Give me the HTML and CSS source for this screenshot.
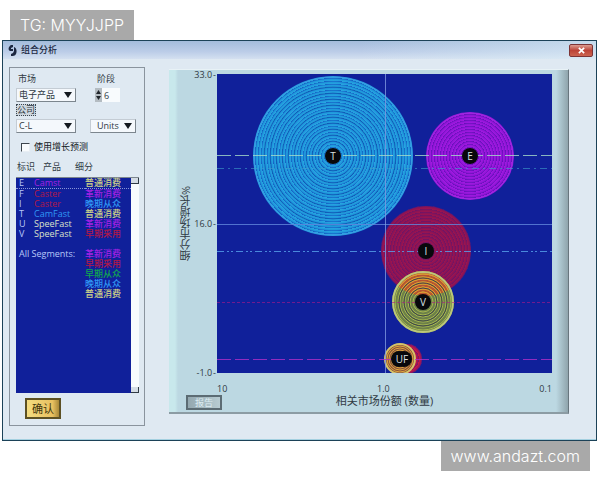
FILE: index.html
```
<!DOCTYPE html>
<html lang="zh-CN">
<head>
    <meta charset="UTF-8">
    <meta name="viewport" content="width=device-width, initial-scale=1.0">
    <title>组合分析</title>
    <link rel="stylesheet" href="styles.css">
</head>
<body>

    <div class="tag tag-top">TG: MYYJJPP</div>

    <main class="window">
        <header class="titlebar">
            <svg class="app-icon" viewBox="0 0 9 13" aria-hidden="true">
                <path d="M5 1 L3 1 C0 3 0 6 2 7 L5 7 L5 5 L3 5 L3 4 L5 3 Z" fill="#1c2740"/>
                <path d="M6 3 C9 4 9 8 8 10 C7 12 5 12 3 12 L3 10 L5 9 L6 7 L6 5 Z" fill="#1c2740"/>
            </svg>
            <h1>组合分析</h1>
            <button type="button" class="close" aria-label="关闭">
                <svg viewBox="0 0 8 8"><path d="M1 1 L7 7 M7 1 L1 7" stroke="#fff" stroke-width="2"/></svg>
            </button>
        </header>

        <div class="content">
            <form class="sidebar">
                <div class="filters">
                    <div class="field">
                        <label for="market">市场</label>
                        <select id="market"><option>电子产品</option></select>
                    </div>
                    <div class="field">
                        <label for="period">阶段</label>
                        <div class="stepper">
                            <svg viewBox="0 0 7 14" aria-hidden="true">
                                <path d="M0 0 H7 V14 H0 Z" fill="#b4bcc2"/>
                                <path d="M1 6 L3.5 2 L6 6 Z M1 8 L3.5 12 L6 8 Z" fill="#20262c"/>
                            </svg>
                            <input type="text" id="period" value="6">
                        </div>
                    </div>
                    <div class="field">
                        <label for="company" class="focused">公司</label>
                        <select id="company"><option>C-L</option></select>
                    </div>
                    <div class="field field-end">
                        <select id="units" class="units" aria-label="Units"><option>Units</option></select>
                    </div>
                </div>

                <div class="check">
                    <input type="checkbox" id="forecast">
                    <label for="forecast">使用增长预测</label>
                </div>

                <div class="list-head"><span>标识</span><span>产品</span><span>细分</span></div>
                <div class="listbox">
                    <div class="list">
                        <table>
                            <tr class="selected"><td>E</td><td class="purple">Camst</td><td class="yellow">普通消费</td></tr>
                            <tr><td>F</td><td class="red">Caster</td><td class="purple">革新消费</td></tr>
                            <tr><td>I</td><td class="red">Caster</td><td class="blue">晚期从众</td></tr>
                            <tr><td>T</td><td class="blue">CamFast</td><td class="yellow">普通消费</td></tr>
                            <tr><td>U</td><td class="cream">SpeeFast</td><td class="purple">革新消费</td></tr>
                            <tr><td>V</td><td class="cream">SpeeFast</td><td class="red">早期采用</td></tr>
                            <tr class="blank"><td colspan="3"></td></tr>
                            <tr><td colspan="2">All Segments:</td><td class="purple">革新消费</td></tr>
                            <tr><td colspan="2"></td><td class="red">早期采用</td></tr>
                            <tr><td colspan="2"></td><td class="green">早期从众</td></tr>
                            <tr><td colspan="2"></td><td class="blue">晚期从众</td></tr>
                            <tr><td colspan="2"></td><td class="yellow">普通消费</td></tr>
                        </table>
                    </div>
                    <div class="scrollbar"><span></span><span></span></div>
                </div>

                <button type="button" class="ok">确认</button>
            </form>

            <section class="chart">
                <div class="y-axis">
                    <span class="y-title">细分市场增长%</span>
                    <div class="y-ticks"><span>33.0</span><span>16.0</span><span>-1.0</span></div>
                </div>
                <svg class="plot" viewBox="0 0 335 299" role="img" aria-label="细分市场增长">
                    <defs>
                        <radialGradient id="ringsT" gradientUnits="userSpaceOnUse" cx="116" cy="82" r="3" spreadMethod="repeat">
                            <stop offset="0" stop-color="#28a4e0"/>
                            <stop offset=".55" stop-color="#1f98dc"/>
                            <stop offset="1" stop-color="#1560c4"/>
                        </radialGradient>
                        <radialGradient id="ringsE" gradientUnits="userSpaceOnUse" cx="253" cy="82" r="3" spreadMethod="repeat">
                            <stop offset="0" stop-color="#a01ae0"/>
                            <stop offset=".55" stop-color="#9216d8"/>
                            <stop offset="1" stop-color="#6410b8"/>
                        </radialGradient>
                        <radialGradient id="ringsI" gradientUnits="userSpaceOnUse" cx="209" cy="177" r="3" spreadMethod="repeat">
                            <stop offset="0" stop-color="#9c1450"/>
                            <stop offset=".55" stop-color="#8c1454"/>
                            <stop offset="1" stop-color="#6c1468"/>
                        </radialGradient>
                        <radialGradient id="ringsF" gradientUnits="userSpaceOnUse" cx="190" cy="285" r="3" spreadMethod="repeat">
                            <stop offset="0" stop-color="#d01840"/>
                            <stop offset="1" stop-color="#7a1468"/>
                        </radialGradient>
                        <clipPath id="overlap"><circle cx="209" cy="177" r="45"/></clipPath>
                    </defs>

                    <rect width="335" height="299" fill="#10209a"/>

                    <circle cx="116" cy="82" r="80" fill="url(#ringsT)"/>
                    <circle cx="116" cy="82" r="79" fill="none" stroke="#3c9ce4"/>
                    <g fill="none" stroke="#0d56ac" opacity=".6">
                        <circle cx="116" cy="82" r="15"/><circle cx="116" cy="82" r="21"/>
                        <circle cx="116" cy="82" r="27"/><circle cx="116" cy="82" r="33"/>
                        <circle cx="116" cy="82" r="39"/><circle cx="116" cy="82" r="45"/>
                        <circle cx="116" cy="82" r="51"/><circle cx="116" cy="82" r="57"/>
                        <circle cx="116" cy="82" r="63"/><circle cx="116" cy="82" r="69"/>
                    </g>
                    <circle cx="253" cy="82" r="44" fill="url(#ringsE)"/>
                    <circle cx="253" cy="82" r="43" fill="none" stroke="#a02ae0"/>
                    <circle cx="209" cy="177" r="45" fill="url(#ringsI)"/>
                    <circle cx="190" cy="285" r="15" fill="url(#ringsF)"/>

                    <circle cx="206" cy="228" r="31" fill="#6c8048"/>
                    <circle cx="206" cy="228" r="31" fill="#b85430" clip-path="url(#overlap)"/>
                    <g fill="none" stroke="#a8b850">
                        <circle cx="206" cy="228" r="10"/><circle cx="206" cy="228" r="13"/>
                        <circle cx="206" cy="228" r="15"/><circle cx="206" cy="228" r="18"/>
                        <circle cx="206" cy="228" r="20"/><circle cx="206" cy="228" r="23"/>
                        <circle cx="206" cy="228" r="25"/><circle cx="206" cy="228" r="28"/>
                        <circle cx="206" cy="228" r="30" stroke="#bcc878" stroke-width="2"/>
                    </g>
                    <g clip-path="url(#overlap)" fill="none" stroke="#e8982c">
                        <circle cx="206" cy="228" r="10"/><circle cx="206" cy="228" r="13"/>
                        <circle cx="206" cy="228" r="15"/><circle cx="206" cy="228" r="18"/>
                        <circle cx="206" cy="228" r="20"/><circle cx="206" cy="228" r="23"/>
                        <circle cx="206" cy="228" r="25"/><circle cx="206" cy="228" r="28"/>
                    </g>
                    <g fill="none" stroke="#3c4448">
                        <circle cx="206" cy="228" r="14"/><circle cx="206" cy="228" r="19"/>
                        <circle cx="206" cy="228" r="24"/>
                    </g>

                    <circle cx="183" cy="285" r="15" fill="#88503c"/>
                    <g fill="none" stroke="#e0a83c">
                        <circle cx="183" cy="285" r="9"/><circle cx="183" cy="285" r="11"/>
                        <circle cx="183" cy="285" r="13"/>
                        <circle cx="183" cy="285" r="15" stroke="#d6c468" stroke-width="2"/>
                    </g>

                    <g fill="none">
                        <path d="M0 150.5 H335" stroke="#6288dc" opacity=".8"/>
                        <path d="M168.5 0 V299" stroke="#8098e0" opacity=".8"/>
                        <path d="M0 81.5 H335" stroke="#a8dcc8" stroke-dasharray="14 4" opacity=".8"/>
                        <path d="M0 94.5 H335" stroke="#40a0cc" stroke-dasharray="7 4 2 4" opacity=".6"/>
                        <path d="M0 177.5 H335" stroke="#58a4ec" stroke-dasharray="7 3 2 2 2 3" opacity=".8"/>
                        <path d="M0 228.5 H335" stroke="#b01888" stroke-dasharray="3 2" opacity=".6"/>
                        <path d="M0 285.5 H335" stroke="#b030c8" stroke-dasharray="14 4" opacity=".8"/>
                    </g>

                    <g class="nodes">
                        <circle cx="116" cy="82" r="8"/><text x="116" y="86">T</text>
                        <circle cx="253" cy="82" r="8"/><text x="253" y="86">E</text>
                        <circle cx="209" cy="177" r="8"/><text x="209" y="181">I</text>
                        <circle cx="206" cy="228" r="8"/><text x="206" y="232">V</text>
                        <circle cx="187" cy="285" r="8"/><circle cx="182" cy="285" r="8"/>
                        <text x="185" y="289">UF</text>
                    </g>
                </svg>
                <div class="x-ticks"><span>10</span><span>1.0</span><span>0.1</span></div>
                <footer class="chart-foot">
                    <button type="button" class="report">报告</button>
                    <span class="x-title">相关市场份额 (数量)</span>
                </footer>
            </section>
        </div>
    </main>

    <a class="tag tag-bottom" href="#">www.andazt.com</a>

</body>
</html>
```

FILE: styles.css
```
* {
    box-sizing: border-box;
}
body {
    margin: 0;
    padding: 10px 0;
    background: white;
    color: #303a44;
    font-family: "Open Sans", "Noto Sans CJK SC", sans-serif;
    font-size: 9px;
    line-height: 12px;
    display: flex;
    flex-direction: column;
}
button, input, select {
    font: inherit;
    color: inherit;
    margin: 0;
    padding: 0;
}

/* grey tags */
.tag {
    background: #a9a9a9;
    color: white;
    font-family: Inter, "Liberation Sans", sans-serif;
    font-size: 16px;
    font-weight: 300;
    line-height: 30px;
    padding: 0 10px;
    text-decoration: none;
}
.tag-top {
    align-self: flex-start;
    margin-left: 10px;
}
.tag-bottom {
    align-self: flex-end;
    margin-right: 10px;
}

/* window */
.window {
    margin: 0 3px 0 2px;
    border: 1px solid #1c4258;
    background: #dfe9f2;
    box-shadow: inset 0 -1px 0 #a4d0e0;
}
.titlebar {
    display: flex;
    align-items: center;
    gap: 4px;
    height: 18px;
    padding: 0 3px 0 5px;
    background: linear-gradient(90deg, rgba(255, 255, 255, 0) 60%, rgba(220, 238, 246, 0.6)), linear-gradient(#a4bcdc, #bccde8 60%, #d4e0f0);
}
.titlebar h1 {
    flex: 1;
    margin: 0;
    font-size: 9px;
    font-weight: 500;
    color: #1c2a44;
}
.app-icon {
    width: 9px;
    height: 13px;
}
.close {
    width: 24px;
    height: 13px;
    display: flex;
    align-items: center;
    justify-content: center;
    border: 1px solid #7c3436;
    border-radius: 2px;
    background: linear-gradient(#dc9c90, #bc4438 50%, #cc6450);
}
.close svg {
    width: 7px;
    height: 7px;
}
.content {
    display: flex;
    gap: 24px;
    padding: 8px 27px 14px 6px;
}

/* sidebar */
.sidebar {
    width: 136px;
    padding: 5px 5px 5px 6px;
    border: 1px solid #8a949e;
    display: flex;
    flex-direction: column;
}
.filters {
    display: grid;
    grid-template-columns: 60px 46px;
    column-gap: 14px;
    row-gap: 2px;
}
.field {
    display: flex;
    flex-direction: column;
    align-items: flex-start;
    gap: 3px;
}
.field-end {
    justify-content: flex-end;
}
.field label {
    margin-left: 2px;
}
.field:nth-child(2) {
    padding-left: 5px;
}
.field .focused {
    margin-left: 0;
    border: 1px dotted #3c4650;
    background: #ccd6de;
    line-height: 10px;
}
select {
    appearance: none;
    width: 60px;
    height: 14px;
    padding-left: 2px;
    border: 1px solid #c4ccd4;
    border-right-color: #7c868e;
    border-bottom-color: #7c868e;
    border-radius: 0;
    line-height: 12px;
    background: #f4f8fc url("data:image/svg+xml,%3Csvg xmlns='http://www.w3.org/2000/svg' width='8' height='6'%3E%3Cpath d='M0 0H8L4 6Z' fill='%23141a20'/%3E%3C/svg%3E") no-repeat right 3px center;
}
.units {
    width: 46px;
    padding-left: 6px;
}
.stepper {
    display: flex;
}
.stepper svg {
    width: 7px;
    height: 14px;
}
.stepper input {
    width: 18px;
    height: 14px;
    padding-left: 2px;
    border: 0;
    background: #f8fbfd;
}
.check {
    display: flex;
    align-items: center;
    gap: 4px;
    margin: 8px 0 8px 5px;
    color: #10161c;
}
.check input {
    appearance: none;
    width: 9px;
    height: 9px;
    border: 1px solid #e8eef4;
    border-top-color: #3c444c;
    border-left-color: #3c444c;
    background: #f8fbfd;
}
.list-head {
    display: grid;
    grid-template-columns: 26px 32px 1fr;
    padding-left: 1px;
    margin-bottom: 4px;
}
.listbox {
    display: flex;
    height: 216px;
    border-top: 1px solid #7c868e;
}
.list {
    flex: 1;
    background: #10209a;
    color: #b8c8f8;
}
.list table {
    width: 100%;
    border-collapse: collapse;
    table-layout: fixed;
}
.list td {
    height: 10px;
    padding: 0;
    line-height: 9px;
    white-space: nowrap;
    font-weight: 500;
}
.list td:first-child {
    width: 18px;
    padding-left: 3px;
}
.list td:last-child {
    width: 46px;
}
.list .selected td {
    border-bottom: 1px dotted #8894d8;
}
.list .purple { color: #a420e4; }
.list .red { color: #b01848; }
.list .blue { color: #3098f4; }
.list .green { color: #10a850; }
.list .yellow { color: #d0d488; }
.list .cream { color: #dce0c8; }
.scrollbar {
    width: 8px;
    display: flex;
    flex-direction: column;
    justify-content: space-between;
    background: #f8fbfd;
}
.scrollbar span {
    height: 6px;
    background: #d4dce4;
    border-right: 1px solid #303a44;
    border-bottom: 1px solid #303a44;
}
.ok {
    width: 36px;
    height: 21px;
    margin: 5px 0 0 9px;
    border: 2px solid #5c5024;
    background: linear-gradient(90deg, #f4dc80, #e8c060 80%, #a88838);
    font-size: 11px;
    line-height: 16px;
    color: #40340c;
}

/* chart */
.chart {
    flex: 1;
    display: grid;
    grid-template-columns: 48px 1fr;
    align-content: start;
    padding: 4px 16px 2px 0;
    margin-top: 2px;
    margin-bottom: 12px;
    background: linear-gradient(90deg, #c8e8ec, #c8e8ec 6px, #bcd8e2 9px, #bcd8e2 97%, #8fa4ac);
    border-top: 1px solid #e8f2f6;
    border-right: 1px solid #68767e;
    border-bottom: 2px solid #8c9ca4;
}
.y-axis {
    display: flex;
    justify-content: flex-end;
    align-items: stretch;
}
.y-title {
    writing-mode: vertical-rl;
    transform: rotate(180deg);
    align-self: center;
    font-size: 11px;
    line-height: 16px;
    white-space: nowrap;
}
.y-ticks {
    display: flex;
    flex-direction: column;
    justify-content: space-between;
    margin: -5px 0 -6px;
    text-align: right;
}
.y-ticks span::after {
    content: "-";
    padding: 0 1px;
}
.plot {
    display: block;
    width: 100%;
}
.nodes circle {
    fill: #08080c;
}
.nodes text {
    fill: #dce0e4;
    font-size: 10px;
    text-anchor: middle;
}
.x-ticks {
    grid-column: 2;
    display: flex;
    justify-content: space-between;
    padding-top: 10px;
}
.chart-foot {
    grid-column: 1 / -1;
    display: grid;
    grid-template-columns: 48px 1fr;
    align-items: start;
}
.report {
    width: 36px;
    height: 15px;
    margin-left: 17px;
    border: 2px solid #5c6c74;
    background: linear-gradient(90deg, #94a8b0, #b8ccd2);
    color: #dcecf2;
    line-height: 10px;
}
.x-title {
    font-size: 11px;
    text-align: center;
}
```
